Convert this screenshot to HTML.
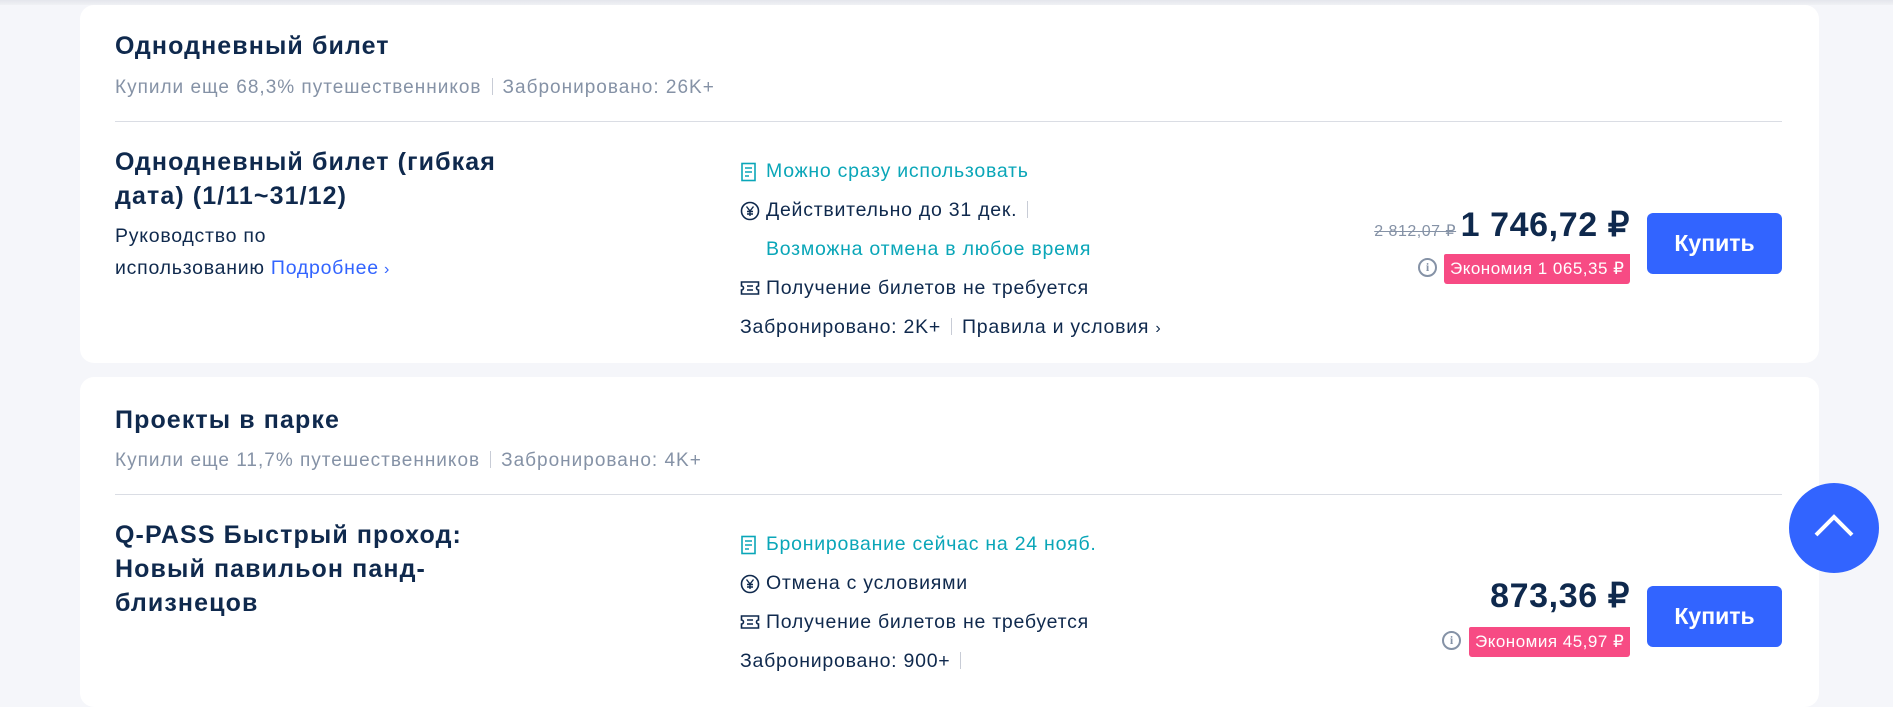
<!DOCTYPE html>
<html><head><meta charset="utf-8"><style>
*{margin:0;padding:0;box-sizing:border-box}
body{width:1893px;height:688px;overflow:hidden;background:#f5f6fa;font-family:"Liberation Sans",Arial,sans-serif;position:relative;color:#0f294d}
.topbar{position:absolute;left:0;top:0;width:1893px;height:5px;background:linear-gradient(#e4e6ec,#f0f1f5)}
.card{position:absolute;left:80px;width:1739px;background:#fff;border-radius:14px}
.a{position:absolute;white-space:nowrap}
.h{font-size:25px;font-weight:bold;color:#0f294d;letter-spacing:1.1px}
.sub{font-size:19px;color:#8592a6;letter-spacing:1px}
.sep{display:inline-block;width:1px;height:17px;background:#c8ccd6;margin:0 10px;vertical-align:-2px}
.line{position:absolute;left:35px;width:1667px;height:1px;background:#dadde4}
.it{font-size:25px;font-weight:bold;line-height:34px;color:#0f294d;letter-spacing:1.1px}
.t{font-size:19.5px;color:#0f294d;letter-spacing:0.75px}
.teal{color:#0aa6b8}
.blue{color:#3264ff}
.ic{position:absolute;left:0;top:2px}
.old{font-size:16px;color:#8592a6;text-decoration:line-through;letter-spacing:0.5px}
.price{font-size:34px;font-weight:bold;color:#0f294d;letter-spacing:0.6px}
.tag{position:absolute;height:30px;background:#f74b84;color:#fff;font-size:17px;line-height:30px;padding:0 6px;border-radius:2px 0 3px 3px;letter-spacing:0.5px}
.btn{position:absolute;width:135px;height:61px;background:#3264ff;border-radius:6px;color:#fff;font-size:23px;font-weight:bold;text-align:center;line-height:61px}
.info{position:absolute;width:19px;height:19px;border:2px solid #8592a6;border-radius:50%;font-size:12px;font-weight:bold;color:#8592a6;text-align:center;line-height:15px;font-family:"Liberation Serif",serif}
</style></head><body>
<div class="topbar"></div>

<div class="card" style="top:5px;height:358px">
  <div class="a h" style="left:35px;top:27px">Однодневный билет</div>
  <div class="a sub" style="left:35px;top:72px">Купили еще 68,3% путешественников<span class="sep"></span>Забронировано: 26K+</div>
  <div class="line" style="top:116px"></div>
  <div class="a it" style="left:35px;top:140px">Однодневный билет (гибкая<br>дата) (1/11~31/12)</div>
  <div class="a t" style="left:35px;top:215px;line-height:32px">Руководство по<br>использованию <span class="blue">Подробнее</span><span class="blue" style="font-size:16px"> ›</span></div>

  <div class="a t teal" style="left:660px;top:155px;padding-left:26px"><svg class="ic" width="17" height="20" viewBox="0 0 17 20"><rect x="2" y="1.5" width="13" height="17" fill="none" stroke="#0aa6b8" stroke-width="1.6"/><path d="M5 6h7M5 10h7M5 14h4" stroke="#0aa6b8" stroke-width="1.6"/></svg>Можно сразу использовать</div>
  <div class="a t" style="left:660px;top:194px;padding-left:26px"><svg class="ic" width="20" height="20" viewBox="0 0 20 20"><circle cx="10" cy="10" r="8.5" fill="none" stroke="#0f294d" stroke-width="1.6"/><path d="M6.5 5.5L10 10l3.5-4.5M10 10v5M7 10.5h6M7 13h6" stroke="#0f294d" stroke-width="1.4" fill="none"/></svg>Действительно до 31 дек.<span class="sep"></span></div>
  <div class="a t teal" style="left:686px;top:233px">Возможна отмена в любое время</div>
  <div class="a t" style="left:660px;top:272px;padding-left:26px"><svg class="ic" width="20" height="18" viewBox="0 0 20 18"><path d="M1.5 3h17v4a2 2 0 0 0 0 4v4h-17v-4a2 2 0 0 0 0-4z" fill="none" stroke="#0f294d" stroke-width="1.6"/><path d="M7 7h6M7 11h6" stroke="#0f294d" stroke-width="1.5"/></svg>Получение билетов не требуется</div>
  <div class="a t" style="left:660px;top:311px">Забронировано: 2K+<span class="sep"></span>Правила и условия <span style="font-size:16px">›</span></div>

  <div class="a" style="right:189px;top:200px;text-align:right"><span class="old">2 812,07 ₽</span> <span class="price">1 746,72 ₽</span></div>
  <div class="info" style="left:1338px;top:253px">i</div>
  <div class="tag" style="left:1364px;top:249px">Экономия 1 065,35 ₽</div>
  <div class="btn" style="left:1567px;top:208px">Купить</div>
</div>

<div class="card" style="top:377px;height:330px">
  <div class="a h" style="left:35px;top:29px">Проекты в парке</div>
  <div class="a sub" style="left:35px;top:73px">Купили еще 11,7% путешественников<span class="sep"></span>Забронировано: 4K+</div>
  <div class="line" style="top:117px"></div>
  <div class="a it" style="left:35px;top:141px">Q-PASS Быстрый проход:<br>Новый павильон панд-<br>близнецов</div>

  <div class="a t teal" style="left:660px;top:156px;padding-left:26px"><svg class="ic" width="17" height="20" viewBox="0 0 17 20"><rect x="2" y="1.5" width="13" height="17" fill="none" stroke="#0aa6b8" stroke-width="1.6"/><path d="M5 6h7M5 10h7M5 14h4" stroke="#0aa6b8" stroke-width="1.6"/></svg>Бронирование сейчас на 24 нояб.</div>
  <div class="a t" style="left:660px;top:195px;padding-left:26px"><svg class="ic" width="20" height="20" viewBox="0 0 20 20"><circle cx="10" cy="10" r="8.5" fill="none" stroke="#0f294d" stroke-width="1.6"/><path d="M6.5 5.5L10 10l3.5-4.5M10 10v5M7 10.5h6M7 13h6" stroke="#0f294d" stroke-width="1.4" fill="none"/></svg>Отмена с условиями</div>
  <div class="a t" style="left:660px;top:234px;padding-left:26px"><svg class="ic" width="20" height="18" viewBox="0 0 20 18"><path d="M1.5 3h17v4a2 2 0 0 0 0 4v4h-17v-4a2 2 0 0 0 0-4z" fill="none" stroke="#0f294d" stroke-width="1.6"/><path d="M7 7h6M7 11h6" stroke="#0f294d" stroke-width="1.5"/></svg>Получение билетов не требуется</div>
  <div class="a t" style="left:660px;top:273px">Забронировано: 900+<span class="sep"></span></div>

  <div class="a" style="right:189px;top:199px"><span class="price">873,36 ₽</span></div>
  <div class="info" style="left:1362px;top:254px">i</div>
  <div class="tag" style="left:1389px;top:250px">Экономия 45,97 ₽</div>
  <div class="btn" style="left:1567px;top:209px">Купить</div>
</div>

<div style="position:absolute;left:1789px;top:483px;width:90px;height:90px;border-radius:50%;background:#3264ff">
  <svg width="90" height="90" viewBox="0 0 90 90"><path d="M27 52L45 34l18 18" fill="none" stroke="#fff" stroke-width="4"/></svg>
</div>
</body></html>
